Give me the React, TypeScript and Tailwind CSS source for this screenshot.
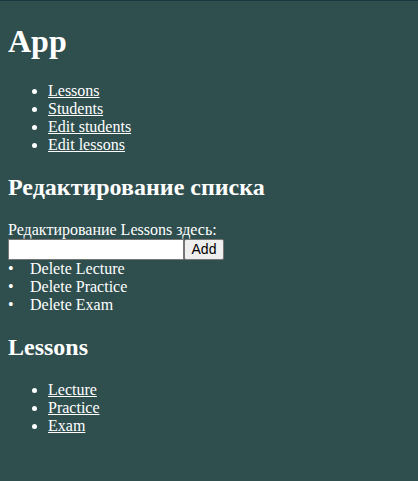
import React, { useState } from "react";

const navLinks = ["Lessons", "Students", "Edit students", "Edit lessons"];

const App: React.FC = () => {
  const [lessons, setLessons] = useState<string[]>(["Lecture", "Practice", "Exam"]);
  const [value, setValue] = useState("");

  const addLesson = () => {
    if (!value.trim()) return;
    setLessons([...lessons, value.trim()]);
    setValue("");
  };

  return (
    <div className="min-h-screen bg-[#2f4f4f] text-white font-['Liberation_Serif','Times_New_Roman',serif] text-base leading-[normal] border-t border-[#1c3641] px-2 pt-[22px] pb-4">
      <h1 className="text-[32px] font-bold leading-[normal] mb-[22px]">App</h1>

      {/* Nav */}
      <ul className="list-disc pl-10 mb-[19.92px]">
        {navLinks.map((link) => (
          <li key={link}>
            <a href="#" className="underline text-white">
              {link}
            </a>
          </li>
        ))}
      </ul>

      <h2 className="text-2xl font-bold leading-[normal] mb-[19.92px]">
        Редактирование списка
      </h2>

      <div>
        <div>Редактирование Lessons здесь:</div>
        <div className="flex items-stretch h-[21px]">
          <input
            type="text"
            value={value}
            onChange={(e) => setValue(e.target.value)}
            className="w-[176px] h-[21px] bg-white border border-[#767676] px-[2px] text-black text-[13.33px] font-['Liberation_Sans',Arial,sans-serif] outline-none"
          />
          <button
            onClick={addLesson}
            className="h-[21px] w-[40px] bg-[#efefef] border border-[#767676] rounded-[2px] text-black text-[14px] leading-none font-['Liberation_Sans',Arial,sans-serif]"
          >
            Add
          </button>
        </div>
        <ul>
          {lessons.map((lesson) => (
            <li key={lesson} className="flex">
              <span className="w-[22px]">•</span>
              <span>Delete {lesson}</span>
            </li>
          ))}
        </ul>
      </div>

      <h2 className="text-2xl font-bold leading-[normal] mt-[20.5px] mb-[19.92px]">
        Lessons
      </h2>

      <ul className="list-disc pl-10">
        {lessons.map((lesson) => (
          <li key={lesson}>
            <a href="#" className="underline text-white">
              {lesson}
            </a>
          </li>
        ))}
      </ul>
    </div>
  );
};

export default App;
